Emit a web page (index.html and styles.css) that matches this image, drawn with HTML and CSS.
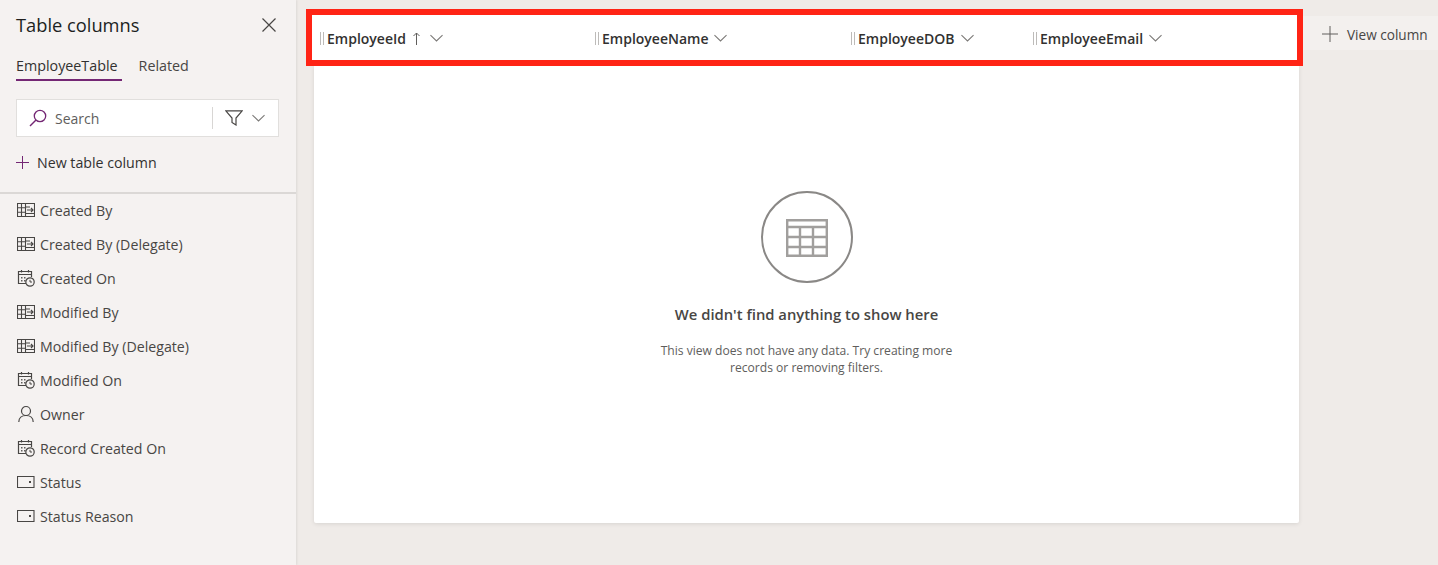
FILE: index.html
```html
<!DOCTYPE html>
<html lang="en">

<head>
    <meta charset="UTF-8">
    <title>Table columns</title>
    <link rel="stylesheet" href="styles.css">
</head>

<body>
    <svg class="defs" width="0" height="0">
        <symbol id="i-lookup" viewBox="0 0 18 14">
            <path d="M.5.5h17v13H.5zM.5 4.800h8M.5 9.200h8M4.500.5v13M8.500.5v13M8.500 4h4.500M8.500 10.500h9" fill="none" stroke="#484644" stroke-width="1.100"/>
            <path d="M10 7h6M14 5 16 7l-2 2" fill="none" stroke="#484644" stroke-width="1.100"/>
        </symbol>
        <symbol id="i-date" viewBox="0 0 18 18">
            <path d="M9 14.500H1.500v-12h13V8M1.500 5.500h13M4.500 1v2.500M11.500 1v2.500" fill="none" stroke="#484644" stroke-width="1.200"/>
            <path d="M4 8h1.500v1.500H4zM7 8h1.500v1.500H7zM4 11h1.500v1.500H4zM7 11h1.500v1.500H7z" fill="#605e5c"/>
            <circle cx="13" cy="13" r="4.200" fill="#f5f2f1" stroke="#484644" stroke-width="1.200"/>
            <path d="M13 10.800V13h2" fill="none" stroke="#484644"/>
        </symbol>
        <symbol id="i-owner" viewBox="0 0 18 18">
            <circle cx="9" cy="6" r="4.500" fill="none" stroke="#484644" stroke-width="1.200"/>
            <path d="M1.800 17c0-4 3-6.500 7.200-6.500s7.200 2.500 7.200 6.500" fill="none" stroke="#484644" stroke-width="1.200"/>
        </symbol>
        <symbol id="i-status" viewBox="0 0 18 14">
            <path d="M.5 1.500h16.500v11H.5z" fill="none" stroke="#484644" stroke-width="1.100"/>
            <path d="M12 6h2v2h-2z" fill="#484644"/>
        </symbol>
        <symbol id="i-chevron" viewBox="0 0 14 8">
            <path d="M.5.8 7 7.200 13.500.8" fill="none" stroke="#7a7876" stroke-width="1.100"/>
        </symbol>
    </svg>

    <div class="page">
        <aside class="sidebar">
            <div class="panel-top">
                <div class="panel-title">
                    <h1>Table columns</h1>
                    <svg class="close-icon" width="14" height="14" viewBox="0 0 14 14">
                        <path d="M.5.5l13 13M13.500.5l-13 13" stroke="#484644" stroke-width="1.200"/>
                    </svg>
                </div>
                <div class="tabs">
                    <span class="tab active">EmployeeTable</span>
                    <span class="tab">Related</span>
                </div>
                <div class="search">
                    <svg class="search-icon" width="18" height="18" viewBox="0 0 18 18">
                        <circle cx="11" cy="7" r="5.700" fill="none" stroke="#742774" stroke-width="1.300"/>
                        <path d="M7 11 1 17" stroke="#742774" stroke-width="1.400"/>
                    </svg>
                    <span class="search-text">Search</span>
                    <span class="search-filter">
                        <svg width="18" height="16" viewBox="0 0 18 16">
                            <path d="M.8.8h16.400L11 8v7l-4-2.500V8z" fill="none" stroke="#484644" stroke-width="1.200"/>
                        </svg>
                        <svg width="13" height="8"><use href="#i-chevron"/></svg>
                    </span>
                </div>
                <div class="new-column">
                    <svg width="13" height="13" viewBox="0 0 13 13">
                        <path d="M6.500 0v13M0 6.500h13" stroke="#742774" stroke-width="1"/>
                    </svg>
                    <span>New table column</span>
                </div>
            </div>
            <ul class="field-list">
                <li><svg width="18" height="14"><use href="#i-lookup"/></svg>Created By</li>
                <li><svg width="18" height="14"><use href="#i-lookup"/></svg>Created By (Delegate)</li>
                <li><svg width="18" height="18"><use href="#i-date"/></svg>Created On</li>
                <li><svg width="18" height="14"><use href="#i-lookup"/></svg>Modified By</li>
                <li><svg width="18" height="14"><use href="#i-lookup"/></svg>Modified By (Delegate)</li>
                <li><svg width="18" height="18"><use href="#i-date"/></svg>Modified On</li>
                <li><svg width="18" height="18"><use href="#i-owner"/></svg>Owner</li>
                <li><svg width="18" height="18"><use href="#i-date"/></svg>Record Created On</li>
                <li><svg width="18" height="14"><use href="#i-status"/></svg>Status</li>
                <li><svg width="18" height="14"><use href="#i-status"/></svg>Status Reason</li>
            </ul>
        </aside>

        <main class="main">
            <div class="header-row">
                <div class="col-heads">
                    <div class="col-head">
                        <i class="grip"></i><b>EmployeeId</b>
                        <svg class="sort" width="7" height="13" viewBox="0 0 7 13">
                            <path d="M3.500 13V1M.5 4l3-3 3 3" fill="none" stroke="#605e5c" stroke-width="1"/>
                        </svg>
                        <svg width="13" height="8"><use href="#i-chevron"/></svg>
                    </div>
                    <div class="col-head"><i class="grip"></i><b>EmployeeName</b><svg width="13" height="8"><use href="#i-chevron"/></svg></div>
                    <div class="col-head col-dob"><i class="grip"></i><b>EmployeeDOB</b><svg width="13" height="8"><use href="#i-chevron"/></svg></div>
                    <div class="col-head"><i class="grip"></i><b>EmployeeEmail</b><svg width="13" height="8"><use href="#i-chevron"/></svg></div>
                </div>
                <div class="view-column">
                    <svg width="16" height="16" viewBox="0 0 16 16">
                        <path d="M8 0v16M0 8h16" stroke="#605e5c" stroke-width="1"/>
                    </svg>
                    <span>View column</span>
                </div>
            </div>
            <div class="card">
                <div class="empty-circle">
                    <svg width="42" height="38" viewBox="0 0 42 38">
                        <path d="M1.200 1.200h39.600v35.600H1.200zM1.200 8h39.600M1.200 18h39.600M1.200 28h39.600M14 8v29M27 8v29" fill="none" stroke="#a19f9d" stroke-width="2.400"/>
                    </svg>
                </div>
                <h2>We didn't find anything to show here</h2>
                <p>This view does not have any data. Try creating more<br>records or removing filters.</p>
            </div>
        </main>
    </div>
</body>

</html>
```

FILE: styles.css
```css
html,
body {
    margin: 0;
    padding: 0;
    height: 100%;
    overflow: hidden;
    background: #efebe8;
    color: #323130;
    font-family: "Open Sans", "Noto Sans", sans-serif;
}

.defs {
    position: absolute;
}

.page {
    display: flex;
    height: 565px;
}

/* left panel */
.sidebar {
    width: 296px;
    flex: none;
    background: #f5f2f1;
    box-shadow: 1px 0 2px rgba(0, 0, 0, 0.08);
}

.panel-top {
    height: 194px;
    box-sizing: border-box;
    padding: 11px 17px 0 16px;
    border-bottom: 2px solid #dbd8d6;
}

.panel-title {
    display: flex;
    justify-content: space-between;
    align-items: center;
    height: 26px;
}

.panel-title h1 {
    margin: 0;
    font-size: 18.3px;
    font-weight: 400;
    color: #201f1e;
}

.close-icon {
    margin: 2px 3px 0 0;
}

.tabs {
    display: flex;
    gap: 17px;
    margin-top: 16px;
    height: 27px;
}

.tab {
    font-size: 14.3px;
    line-height: 26px;
    color: #484644;
}

.tab.active {
    color: #323130;
    box-shadow: 0 2px 0 #742774;
    height: 26px;
    padding-right: 4px;
    font-weight: 500;
}

.search {
    display: flex;
    align-items: center;
    height: 38px;
    margin-top: 19px;
    padding: 0 13px 0 12px;
    background: #fff;
    border: 1px solid #e1dfdd;
    box-sizing: border-box;
}

.search-text {
    flex: 1;
    margin-left: 8px;
    font-size: 14px;
    color: #605e5c;
}

.search-filter {
    display: flex;
    align-items: center;
    gap: 9px;
    height: 22px;
    padding-left: 12px;
    border-left: 1px solid #d8d6d4;
}

.new-column {
    display: flex;
    align-items: center;
    gap: 8px;
    margin-top: 16px;
    font-size: 14.2px;
    color: #323130;
}

.field-list {
    list-style: none;
    margin: -1px 0 0;
    padding: 0 0 0 17px;
}

.field-list li {
    display: flex;
    align-items: center;
    height: 34px;
    font-size: 14.2px;
    color: #484644;
}

.field-list svg {
    width: 18px;
    margin-right: 5px;
    flex: none;
}

/* grid area */
.main {
    flex: 1;
    padding: 9px 0 0 10px;
    min-width: 0;
}

.header-row {
    display: flex;
    align-items: flex-start;
}

.col-heads {
    display: grid;
    grid-template-columns: 275px 256px 182px 1fr;
    align-items: center;
    width: 997px;
    height: 57px;
    flex: none;
    box-sizing: border-box;
    padding: 1px 0 0 8px;
    background: #fff;
    border: 6px solid #ff2415;
}

.col-head {
    display: flex;
    align-items: center;
    font-size: 14px;
    color: #323130;
}

.col-head b {
    font-weight: 600;
}

.col-head svg {
    margin-left: 6px;
}

.col-head .sort {
    margin-left: 7px;
    margin-right: 4px;
}

.col-dob svg {
    margin-left: 7px;
}

.grip {
    width: 4px;
    height: 13px;
    margin-right: 3px;
    border-left: 1px solid #bdbbb9;
    border-right: 1px solid #bdbbb9;
    box-sizing: border-box;
}

.view-column {
    display: flex;
    align-items: center;
    gap: 9px;
    flex: 1;
    height: 34px;
    margin-top: 7px;
    padding: 2px 0 0 19px;
    box-sizing: border-box;
    background: #f3f0ee;
    font-size: 13.6px;
    color: #484644;
    white-space: nowrap;
}

.card {
    display: flex;
    flex-direction: column;
    align-items: center;
    width: 985px;
    height: 457px;
    box-sizing: border-box;
    margin-left: 8px;
    padding-top: 125px;
    background: #fff;
    border-radius: 0 0 2px 2px;
    box-shadow: 0 1px 4px rgba(0, 0, 0, 0.1);
}

.empty-circle {
    display: flex;
    align-items: center;
    justify-content: center;
    width: 92px;
    height: 92px;
    box-sizing: border-box;
    border: 2px solid #8a8886;
    border-radius: 50%;
}

.empty-circle svg {
    margin-top: 2px;
}

.card h2 {
    margin: 21px 0 0;
    font-size: 14.8px;
    line-height: 20px;
    font-weight: 600;
    color: #484644;
}

.card p {
    margin: 18px 0 0;
    font-size: 12.1px;
    line-height: 17px;
    text-align: center;
    color: #605e5c;
}
```
